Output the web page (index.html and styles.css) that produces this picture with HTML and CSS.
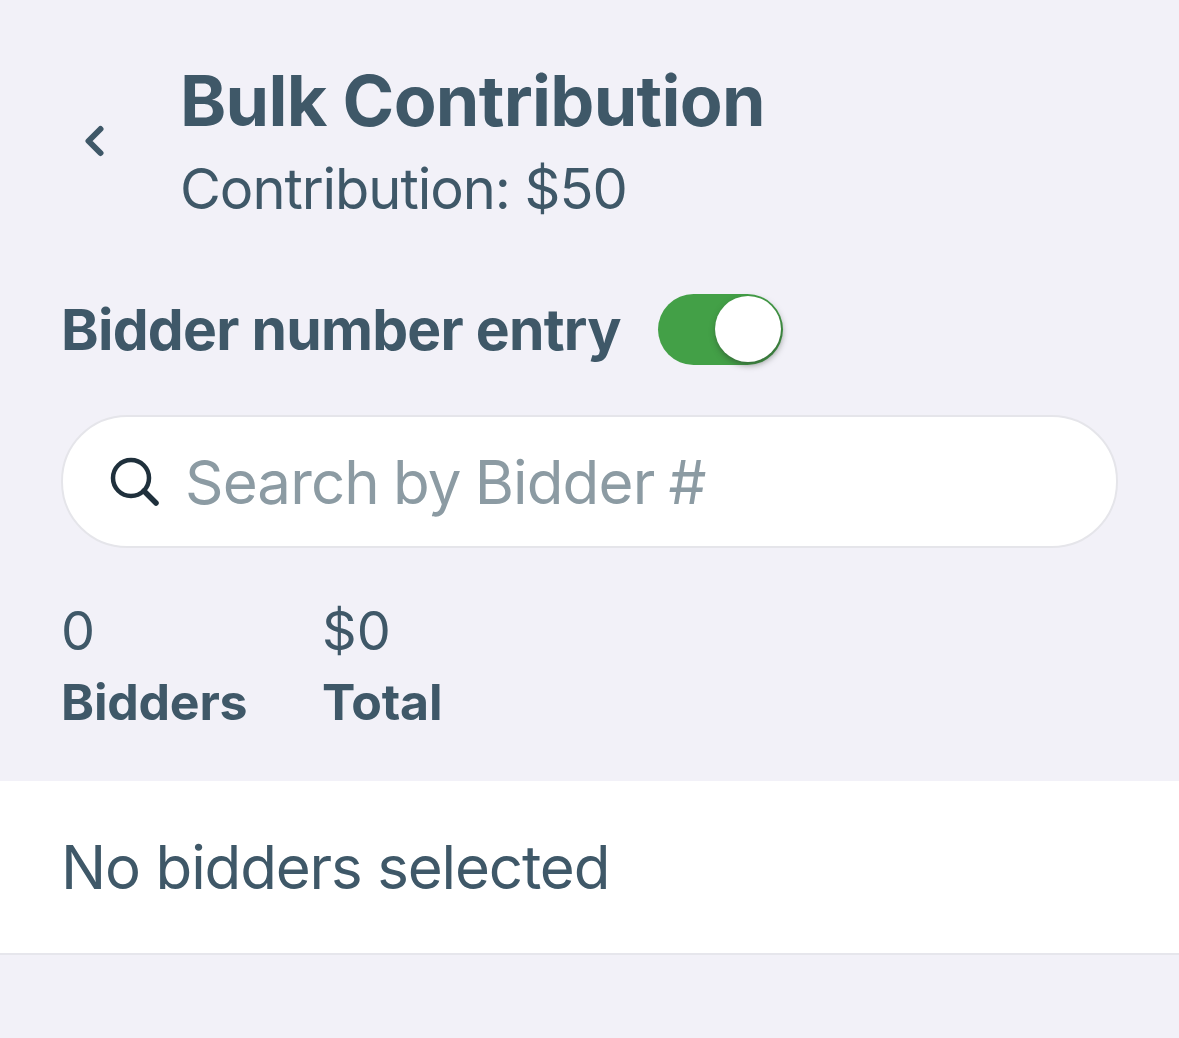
FILE: index.html
```html
<!DOCTYPE html>
<html lang="en">
<head>
<meta charset="utf-8">
<title>Bulk Contribution</title>
<link rel="stylesheet" href="styles.css">
</head>
<body>
<header class="header">
  <button class="back" aria-label="Back">
    <svg width="24" height="34" viewBox="0 0 24 34"><path d="M17.5 4 L5.5 16 L17.5 28" fill="none" stroke="#3f5868" stroke-width="6" stroke-linecap="round" stroke-linejoin="round"/></svg>
  </button>
  <div class="titles">
    <h1 class="title">Bulk Contribution</h1>
    <p class="subtitle">Contribution: $50</p>
  </div>
</header>
<section class="entry">
  <span class="entry-label">Bidder number entry</span>
  <span class="switch"><span class="knob"></span></span>
</section>
<div class="search">
  <svg class="search-icon" width="50" height="50" viewBox="0 0 50 50"><circle cx="21" cy="21" r="18" fill="none" stroke="#1f303c" stroke-width="4.5"/><path d="M34 34 L46 46" stroke="#1f303c" stroke-width="5.5" stroke-linecap="round"/></svg>
  <span class="placeholder">Search by Bidder #</span>
</div>
<section class="stats">
  <div class="stat stat-bidders"><span class="stat-value">0</span><span class="stat-label">Bidders</span></div>
  <div class="stat"><span class="stat-value">$0</span><span class="stat-label">Total</span></div>
</section>
<section class="list"><span class="empty">No bidders selected</span></section>
</body>
</html>
```
FILE: styles.css
```css
html, body { margin: 0; padding: 0; }
body {
  width: 1179px;
  height: 1038px;
  overflow: hidden;
  background: #f2f1f8;
  color: #3f5868;
  font-family: Inter, "Liberation Sans", sans-serif;
}
.header {
  display: flex;
  align-items: center;
  padding: 62px 0 0 83px;
  height: 160px;
}
.back {
  width: 97px;
  height: 34px;
  padding: 0;
  border: 0;
  background: none;
  display: flex;
  align-items: center;
  justify-content: flex-start;
}
.back svg { width: 24px; height: 34px; display: block; }
.titles { display: flex; flex-direction: column; }
.title {
  margin: 0;
  font-size: 70px;
  line-height: 78px;
  font-weight: 700;
  letter-spacing: -0.7px;
}
.subtitle {
  margin: 16px 0 0;
  font-size: 56px;
  line-height: 66px;
  font-weight: 400;
  letter-spacing: -1.05px;
}
.entry {
  display: flex;
  align-items: center;
  gap: 37px;
  padding: 0 0 0 61px;
  margin-top: 71px;
  height: 72px;
}
.entry-label { font-size: 57px; font-weight: 700; letter-spacing: -0.75px; }
.switch {
  display: flex;
  justify-content: flex-end;
  align-items: center;
  width: 125px;
  height: 71px;
  box-sizing: border-box;
  padding: 0 2px;
  border-radius: 36px;
  background: #43a047;
}
.knob {
  width: 66px;
  height: 66px;
  border-radius: 50%;
  background: #fff;
  box-shadow: 1px 3px 6px rgba(40, 50, 40, .5);
}
.search {
  display: flex;
  align-items: center;
  gap: 25px;
  box-sizing: border-box;
  margin: 50px 61px 0 61px;
  height: 133px;
  padding: 0 0 0 47px;
  background: #fff;
  border: 2px solid #e5e5ea;
  border-radius: 66px;
}
.search-icon { width: 50px; height: 50px; flex: none; }
.placeholder { font-size: 60px; color: #8c9ba3; letter-spacing: -0.85px; word-spacing: -2px; }
.stats {
  display: flex;
  padding: 53px 0 0 61px;
}
.stat { display: flex; flex-direction: column; }
.stat-bidders { width: 261px; }
.stat-value { font-size: 54px; line-height: 60px; }
.stat-label { font-size: 50px; line-height: 60px; margin-top: 11px; font-weight: 700; letter-spacing: -0.2px; }
.list {
  display: flex;
  align-items: center;
  box-sizing: border-box;
  margin-top: 49px;
  height: 174px;
  padding: 0 0 0 61px;
  background: #fff;
  border-bottom: 2px solid #e6e6ec;
}
.empty { font-size: 60px; letter-spacing: -1.15px; }
```
